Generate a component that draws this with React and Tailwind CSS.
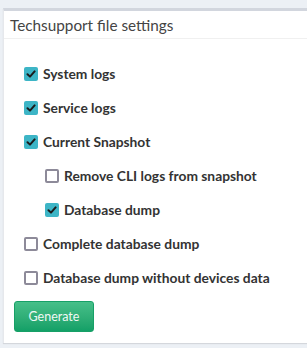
import React from "react";

function Box({ checked }) {
  if (checked) {
    return (
      <span className="flex h-[14px] w-[14px] shrink-0 items-center justify-center rounded-[2px] bg-[#3db5c6]">
        <svg width="10" height="10" viewBox="0 0 10 10">
          <path d="M1.5 5.2 L4 7.6 L8.6 2.4" fill="none" stroke="#1b1b1b" strokeWidth="2" strokeLinecap="round" strokeLinejoin="round" />
        </svg>
      </span>
    );
  }
  return <span className="h-[14px] w-[14px] shrink-0 rounded-[2px] border-2 border-[#8d8a99] bg-white" />;
}

function Row({ checked, label, indent }) {
  return (
    <div className={`flex h-[34px] items-center gap-[5px] ${indent ? "pl-[41px]" : "pl-[20px]"}`}>
      <Box checked={checked} />
      <span className="text-[13.8px] font-bold text-[#333]">{label}</span>
    </div>
  );
}

export default function App() {
  return (
    <div className="h-[348px] w-[307px] overflow-hidden bg-[#ecf0f5] pt-[8px] pl-[3px]" style={{ fontFamily: "Lato, 'Noto Sans', sans-serif" }}>
      <div className="h-[335px] w-[320px] border-t-[3px] border-[#d2d6de] bg-white shadow-[0_1px_1px_rgba(0,0,0,0.1)] border-l border-l-[#e6e8ec]">
        <div className="flex h-[28px] items-center border-b border-[#f0f0f0] pl-[6px] pt-[2px] text-[15.3px] text-[#444]">
          Techsupport file settings
        </div>
        <div className="pt-[18px]">
          <Row checked label="System logs" />
          <Row checked label="Service logs" />
          <Row checked label="Current Snapshot" />
          <Row indent label="Remove CLI logs from snapshot" />
          <Row indent checked label="Database dump" />
          <Row label="Complete database dump" />
          <Row label="Database dump without devices data" />
          <div className="pl-[10px] pt-[6px]">
            <button className="h-[31px] w-[80px] rounded-[3px] border border-[#17a067] bg-gradient-to-b from-[#46bf89] to-[#12a067] pt-[2px] text-[12.5px] text-[#f0f8f4]">
              Generate
            </button>
          </div>
        </div>
      </div>
    </div>
  );
}
